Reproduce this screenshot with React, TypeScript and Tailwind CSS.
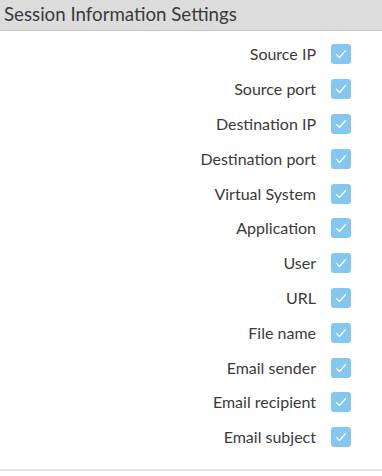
const fields = [
  "Source IP",
  "Source port",
  "Destination IP",
  "Destination port",
  "Virtual System",
  "Application",
  "User",
  "URL",
  "File name",
  "Email sender",
  "Email recipient",
  "Email subject",
];

function Check() {
  return (
    <span className="flex h-[20px] w-[20px] items-center justify-center rounded-[3px] bg-[#84c8f1]">
      <svg width="14" height="14" viewBox="0 0 14 14" fill="none">
        <path d="M2.5 7.5 L5.5 10.5 L11.5 3.5" stroke="#ffffff" strokeWidth="1.2" strokeLinecap="round" strokeLinejoin="round" />
      </svg>
    </span>
  );
}

export default function App() {
  return (
    <div className="h-[476px] w-[382px] bg-white font-['Lato',sans-serif] text-[#3a3a3a]">
      <div className="h-[31px] border-b border-[#c8c8c8] bg-[#dcdcdd] pl-[4px] text-[18.7px] leading-[28px]">
        Session Information Settings
      </div>
      <div className="flex flex-col pt-[6px]">
        {fields.map((f) => (
          <div key={f} className="flex h-[34.8px] items-center justify-end pr-[31px]">
            <span className="text-[16px]">{f}</span>
            <span className="ml-[15px]">
              <Check />
            </span>
          </div>
        ))}
      </div>
      <div className="mt-[14px] border-b-2 border-[#e2e2e2]" />
    </div>
  );
}
